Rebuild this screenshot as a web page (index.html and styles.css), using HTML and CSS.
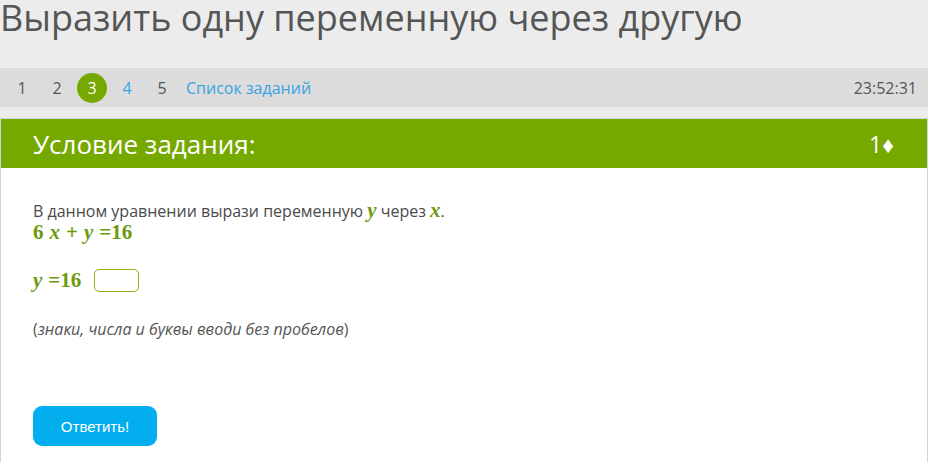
FILE: index.html
```html
<!DOCTYPE html>
<html lang="ru">
<head>
    <meta charset="UTF-8">
    <title>Выразить одну переменную через другую</title>
    <link rel="stylesheet" href="styles.css">
</head>
<body>
    <h1 class="page-title">Выразить одну переменную через другую</h1>

    <nav class="task-nav">
        <div class="task-list">
            <span class="task-num">1</span>
            <span class="task-num">2</span>
            <span class="task-num current">3</span>
            <a class="task-num link" href="#">4</a>
            <span class="task-num">5</span>
            <a class="task-link" href="#">Список заданий</a>
        </div>
        <span class="timer">23:52:31</span>
    </nav>

    <div class="card">
        <div class="card-head">
            <span class="card-title">Условие задания:</span>
            <span class="points">1♦</span>
        </div>
        <div class="card-body">
            <p class="statement">
                В данном уравнении вырази переменную <span class="math"><i>y</i></span> через <span class="math"><i>x</i></span>.<br>
                <span class="math"><span class="num">6</span><i class="var">x</i><span class="op">+</span><i class="var">y</i><span class="eq">=</span>16</span>
            </p>
            <div class="answer-row">
                <span class="math"><i class="var">y</i><span class="eq">=</span>16</span>
                <input class="answer" type="text">
            </div>
            <p class="hint">(<i>знаки, числа и буквы вводи без пробелов</i>)</p>
            <button class="submit">Ответить!</button>
        </div>
    </div>
</body>
</html>
```

FILE: styles.css
```css
:root {
    --page: #ececec;
    --bar: #dcdcdc;
    --green: #76a900;
    --math: #6d9a0c;
    --text: #4a4a4a;
    --blue: #3aa3e3;
}
body {
    margin: 0;
    background: var(--page);
    font-family: 'Open Sans', sans-serif;
    color: var(--text);
    height: 462px;
    overflow: hidden;
}
.page-title {
    margin: 0;
    font-size: 36px;
    font-weight: normal;
    line-height: 36px;
    color: #555;
    height: 68px;
}
.task-nav {
    display: flex;
    align-items: center;
    justify-content: space-between;
    height: 39px;
    background: var(--bar);
    padding: 0 11px 0 7px;
    font-size: 16px;
}
.task-list {
    display: flex;
    align-items: center;
    gap: 5px;
}
.task-num {
    width: 30px;
    height: 30px;
    line-height: 30px;
    text-align: center;
    color: #555;
    text-decoration: none;
}
.task-num.current {
    background: var(--green);
    color: #fff;
    border-radius: 50%;
}
.task-num.link,
.task-link {
    color: var(--blue);
    text-decoration: none;
}
.task-link {
    margin-left: 4px;
}
.timer {
    color: #555;
}
.card {
    margin-top: 11px;
    background: #fff;
    border: 1px solid #d4d4d4;
    border-bottom: none;
    height: 400px;
}
.card-head {
    display: flex;
    align-items: center;
    justify-content: space-between;
    height: 49px;
    background: var(--green);
    color: #fff;
    padding: 0 33px 0 32px;
}
.card-title {
    font-size: 26px;
}
.points {
    font-size: 23px;
}
.card-body {
    padding: 32px 32px 0;
}
.statement {
    margin: 0;
    font-size: 16px;
    line-height: 22px;
}
.math {
    font-family: 'Liberation Serif', serif;
    font-weight: bold;
    font-size: 21px;
    color: var(--math);
}
.statement .math {
    line-height: 16px;
}
.math .num {
    margin-right: 6px;
}
.math .op {
    margin: 0 6px;
}
.math .eq {
    margin-left: 6px;
}
.answer-row {
    display: flex;
    align-items: center;
    gap: 13px;
    margin-top: 24px;
}
.answer {
    width: 45px;
    height: 23px;
    box-sizing: border-box;
    border: 1px solid #8db21a;
    border-radius: 5px;
    background: #fff;
}
.hint {
    margin: 25px 0 0;
    font-size: 16px;
    color: #555;
}
.submit {
    margin-top: 66px;
    width: 124px;
    height: 40px;
    border: none;
    border-radius: 9px;
    background: #03aeef;
    color: #fff;
    font-family: 'Liberation Sans', Arial, sans-serif;
    font-size: 15px;
}
```
